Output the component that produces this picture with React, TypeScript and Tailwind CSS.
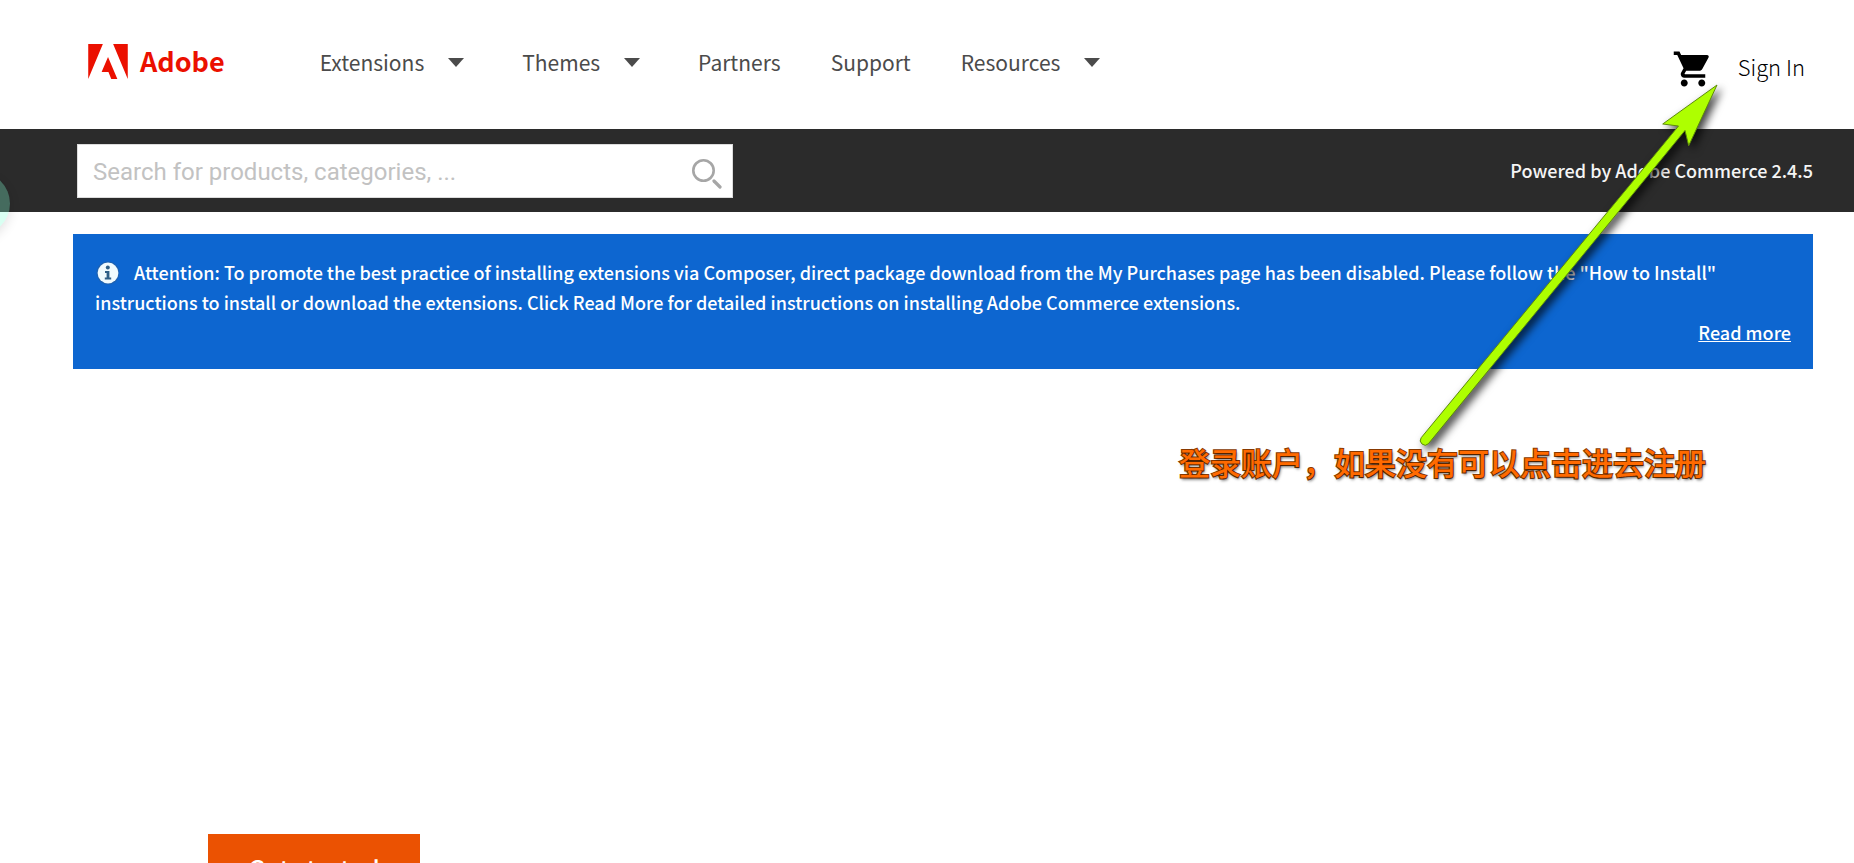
import { MdShoppingCart } from "react-icons/md";

type NavItem = { label: string; menu: boolean };

const navItems: NavItem[] = [
  { label: "Extensions", menu: true },
  { label: "Themes", menu: true },
  { label: "Partners", menu: false },
  { label: "Support", menu: false },
  { label: "Resources", menu: true },
];

function Logo() {
  return (
    <a href="#home" className="flex items-start gap-3 text-[#eb1000]">
      <svg viewBox="0 1.376 24 21.248" className="h-[35px] w-10" fill="currentColor" aria-hidden="true">
        <path d="M13.966 22.624l-1.69-4.281H8.122l3.892-9.144 5.662 13.425zM8.884 1.376H0v21.248zm15.116 0h-8.884L24 22.624Z" />
      </svg>
      <span className="text-[27px] leading-[34px] font-bold">Adobe</span>
    </a>
  );
}

function Header() {
  return (
    <header className="flex h-[129px] items-start pr-[49px] pl-[88px]">
      <div className="pt-11">
        <Logo />
      </div>
      <nav className="ml-[95px] flex items-center pt-[46px] text-[21px] leading-8 text-[#4b4b4b]">
        {navItems.map((item) =>
          item.menu ? (
            <button key={item.label} type="button" className="mr-[58px] flex items-center gap-6">
              {item.label}
              <svg viewBox="0 0 16 9" className="h-[9px] w-4" fill="currentColor" aria-hidden="true">
                <path d="M0 0h16L8 9z" />
              </svg>
            </button>
          ) : (
            <a key={item.label} href="#section" className="mr-[50px]">
              {item.label}
            </a>
          )
        )}
      </nav>
      <div className="ml-auto flex items-start gap-6 pt-[48px] text-black">
        <button type="button" aria-label="Cart">
          <MdShoppingCart size={42} />
        </button>
        <a href="#sign-in" className="text-[22px] leading-9 font-light">
          Sign In
        </a>
      </div>
    </header>
  );
}

function SearchBar() {
  return (
    <div className="flex h-[83px] items-center justify-between bg-[#2b2b2b] pr-[41px] pl-[77px]">
      <form
        className="flex h-[54px] w-[656px] items-center border border-[#dcdcdc] bg-white pr-2.5 pl-[15px]"
        onSubmit={(e) => e.preventDefault()}
      >
        <input
          type="text"
          aria-label="Search"
          placeholder="Search for products, categories, ..."
          className="min-w-0 flex-1 bg-transparent pt-0.5 font-['Roboto',sans-serif] text-2xl text-[#333] outline-none placeholder:text-[#c2c2c2]"
        />
        <button type="submit" aria-label="Search">
          <svg viewBox="0 0 30 30" className="mt-1.5 size-[30px]" fill="none" stroke="#a6a6a6" strokeLinecap="round" aria-hidden="true">
            <circle cx="11.5" cy="11.5" r="10.2" strokeWidth="2.6" />
            <path d="M22 22l6 6" strokeWidth="3.2" />
          </svg>
        </button>
      </form>
      <p className="pb-0.5 text-lg font-medium text-[#f5f5f5]">Powered by Adobe Commerce 2.4.5</p>
    </div>
  );
}

function Notice() {
  return (
    <section className="mt-[22px] mr-[41px] ml-[73px] bg-[#0d66d0] px-[22px] pt-[23px] pb-[22px] text-lg leading-[30px] font-medium text-white">
      <p>
        <svg viewBox="0 0 24 24" className="-mt-2 mr-[15px] -mb-1 inline size-6 align-[-1px]" aria-hidden="true">
          <circle cx="13" cy="12" r="11.5" fill="#2a5f9c" opacity="0.6" />
          <circle cx="13" cy="12" r="10.4" fill="#f1fbfe" />
          <circle cx="12.8" cy="6.4" r="2" fill="#2f5f86" />
          <path d="M10 10h4.4v6.6h1.8v2H9.8v-2h1.8V12H10z" fill="#2f5f86" />
        </svg>
        Attention: To promote the best practice of installing extensions via Composer, direct package download from the
        My Purchases page has been disabled. Please follow the "How to Install" instructions to install or download the
        extensions. Click Read More for detailed instructions on installing Adobe Commerce extensions.
      </p>
      <a href="#read-more" className="ml-auto block w-fit underline">
        Read more
      </a>
    </section>
  );
}

function Annotation() {
  return (
    <>
      <svg
        viewBox="0 0 340 380"
        className="pointer-events-none absolute top-[75px] right-[114px] h-[380px] w-[340px] drop-shadow-[4px_4px_4px_rgba(0,0,0,0.75)]"
        aria-hidden="true"
      >
        <path
          d="M317 10L288.7 70.7L285 55.5L28.4 368.7A4.7 4.7 0 0 1 21.2 362.7L278.5 51L262.7 49Z"
          fill="#aeff00"
          stroke="#5d8a0a"
          strokeWidth="1"
          strokeLinejoin="round"
        />
      </svg>
      <p className="pointer-events-none absolute top-[442px] right-[148px] font-['Noto_Sans_CJK_SC',sans-serif] text-[31px] leading-10 font-medium whitespace-nowrap text-[#ff6a00] [-webkit-text-stroke:2px_#8a3a00] [paint-order:stroke_fill] [text-shadow:1px_2px_3px_rgba(0,0,0,0.6)]">
        登录账户，如果没有可以点击进去注册
      </p>
    </>
  );
}

export default function App() {
  return (
    <div className="relative h-screen overflow-hidden bg-white font-['Noto_Sans_CJK_SC',sans-serif]">
      <Header />
      <SearchBar />
      <main>
        <Notice />
        <div className="pt-[465px] pl-[208px]">
          <button type="button" className="bg-[#eb5202] px-10 pt-[18px] pb-5 text-[25px] leading-8 font-medium text-white">
            Get started
          </button>
        </div>
      </main>
      <div className="absolute top-[172px] -left-[53px] size-[63px] rounded-full bg-[#82ffd5]/30 shadow-[0_4px_12px_rgba(0,0,0,0.12)]" />
      <Annotation />
    </div>
  );
}
